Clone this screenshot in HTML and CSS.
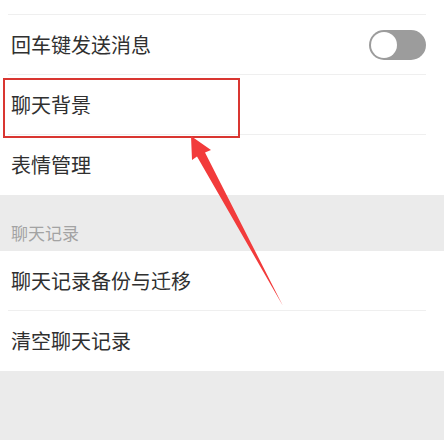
FILE: index.html
```html
<!DOCTYPE html>
<html lang="zh-CN">
<head>
<meta charset="utf-8">
<link rel="stylesheet" href="styles.css">
</head>
<body>
<div class="page">
  <div class="row row-top"></div>
  <div class="row">
    <span class="label">回车键发送消息</span>
    <span class="toggle"><span class="knob"></span></span>
  </div>
  <div class="row"><span class="label">聊天背景</span></div>
  <div class="row row-last"><span class="label">表情管理</span></div>
  <div class="section">聊天记录</div>
  <div class="row"><span class="label">聊天记录备份与迁移</span></div>
  <div class="row row-last"><span class="label">清空聊天记录</span></div>
  <div class="footer"></div>

  <div class="highlight"></div>
  <svg class="arrow" width="444" height="440" viewBox="0 0 444 440">
    <polygon points="191,136 211,150 205,152.5 283,306 197,156.5 192,160" fill="#f23b3b"/>
  </svg>
</div>
</body>
</html>
```

FILE: styles.css
```css
* { box-sizing: border-box; margin: 0; padding: 0; }
html, body { width: 444px; height: 440px; overflow: hidden; background: #fff; }
body {
  font-family: "Noto Sans CJK SC", "Noto Sans", sans-serif;
  color: #303030;
}
.page {
  position: relative;
  width: 444px;
  height: 440px;
  display: flex;
  flex-direction: column;
}
.row {
  height: 60px;
  flex: none;
  display: flex;
  align-items: center;
  justify-content: space-between;
  padding: 0 18px 0 11px;
  position: relative;
}
.row::after {
  content: "";
  position: absolute;
  left: 8px;
  right: 18px;
  bottom: 0;
  height: 1px;
  background: #efefef;
}
.row-top { height: 15px; }
.row-last::after { display: none; }
.label {
  font-size: 20px;
  line-height: 24px;
  margin-top: -1px;
}
.toggle {
  width: 57px;
  height: 30px;
  border-radius: 15px;
  background: #9c9c9c;
  display: flex;
  align-items: center;
  padding-left: 2px;
}
.knob {
  width: 26px;
  height: 26px;
  border-radius: 50%;
  background: #fff;
}
.section {
  height: 56px;
  flex: none;
  background: #ebebeb;
  color: #a3a3a3;
  font-size: 17px;
  line-height: 20px;
  padding: 28px 0 0 11px;
}
.footer {
  flex: 1;
  background: #ebebeb;
}
.highlight {
  position: absolute;
  left: 3px;
  top: 78px;
  width: 237px;
  height: 60px;
  border: 2px solid #d93631;
}
.arrow {
  position: absolute;
  left: 0;
  top: 0;
}
```
